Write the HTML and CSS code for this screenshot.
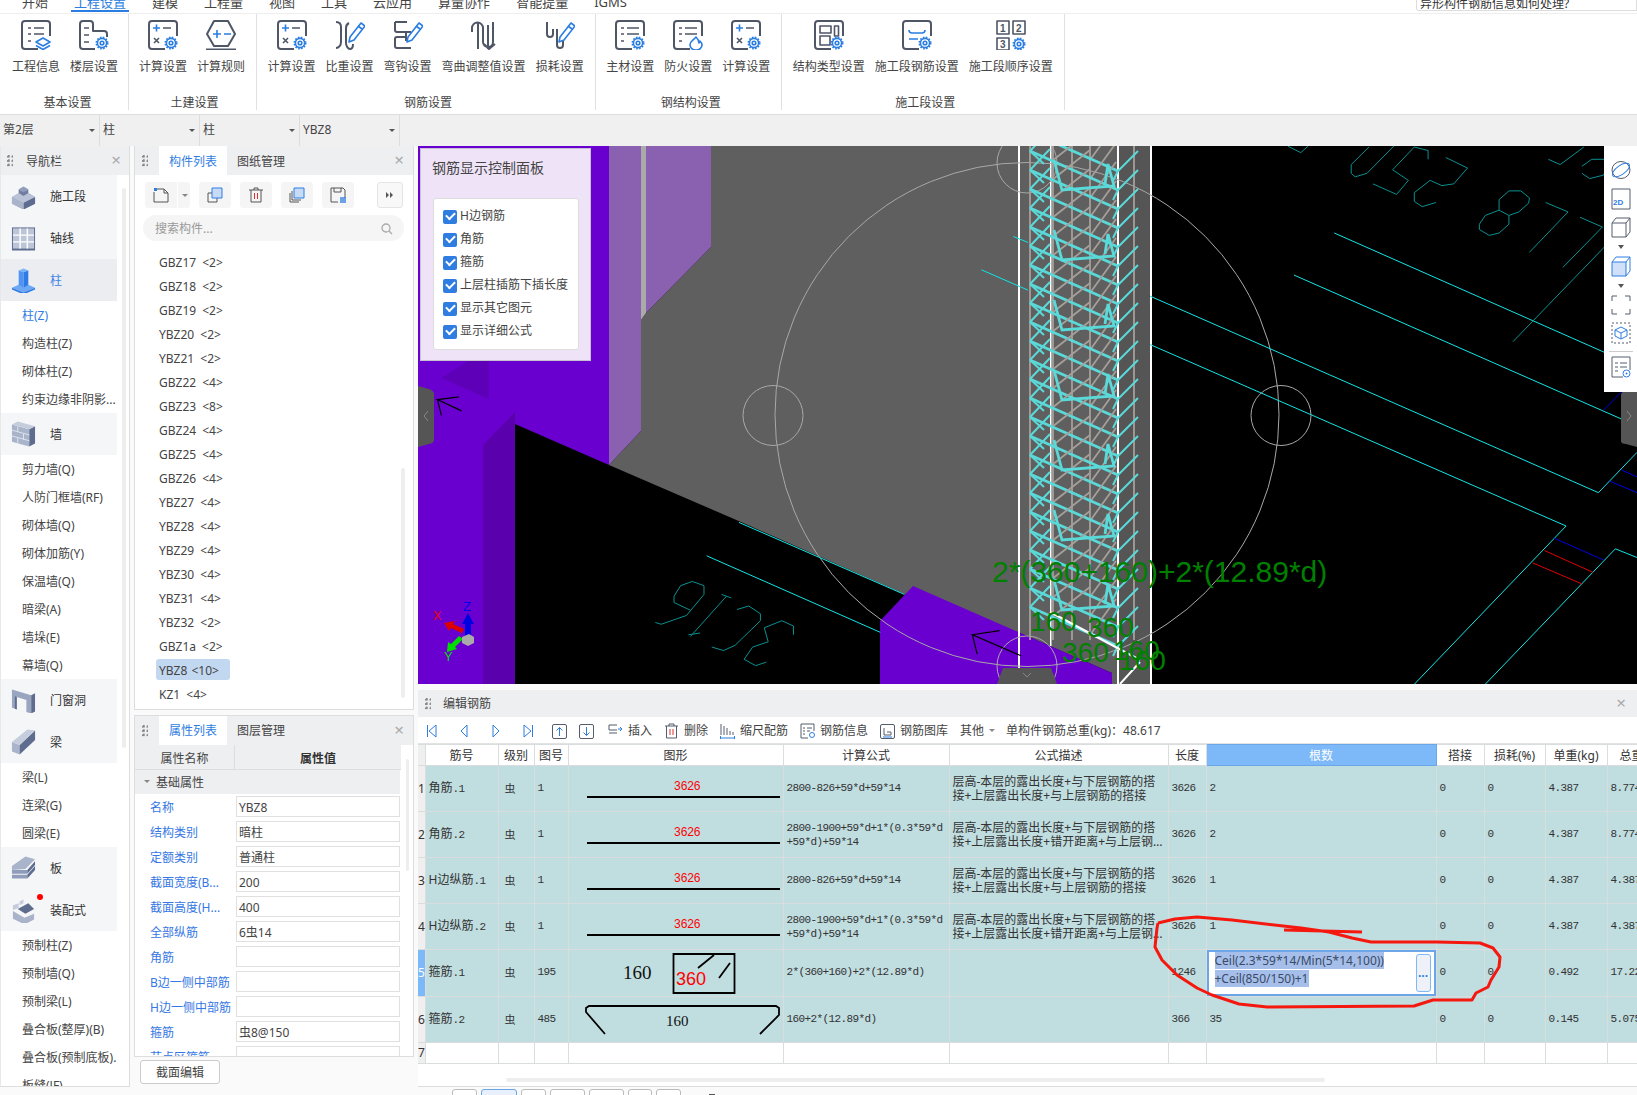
FILE: index.html
```html
<!DOCTYPE html>
<html lang="zh">
<head>
<meta charset="utf-8">
<title>编辑钢筋</title>
<link rel="stylesheet" href="styles.css">
</head>
<body>
<svg class="defs" width="0" height="0" aria-hidden="true">
  <defs>
    <g id="gear"><circle r="4.6" class="bl fw"/><circle r="1.8" class="bl"/><circle r="5.7" class="bl dash"/></g>
    <path id="frame" class="gr" d="M17 29H4a3 3 0 0 1-3-3V4a3 3 0 0 1 3-3h22a3 3 0 0 1 3 3v12"/>
    <g id="pencil"><path class="bl fw" d="M26 3l4 3-11 14-5 2 1-5z"/><path class="bl" d="M23 6l4 3"/></g>
    <g id="lines"><path class="gr2" d="M7 8h3M13 8h10M7 14h3M13 14h10M7 21h3"/></g>
    <g id="st">
      <path class="me3" d="M1052 160l38-30M1090 178l26-36"/>
      <path class="me1" d="M1030 150l88 39"/>
      <path class="me2" d="M1030 150l20-21M1118 189l20-20M1030 150l14 13M1118 189l-5 10"/>
    </g>
    <g id="hook"><path class="me1" d="M1054 200l8 30 52 -4-6-22-3 20"/></g>
  </defs>
</svg>

<div class="app">
  <nav class="menu">
    <a>开始</a><a class="on">工程设置</a><a>建模</a><a>工程量</a><a>视图</a><a>工具</a><a>云应用</a><a>算量协作</a><a>智能提量</a><a>IGMS</a>
    <div class="ask">异形构件钢筋信息如何处理?</div>
  </nav>

  <header class="ribbon">
    <section class="grp">
      <div class="items">
        <div class="item"><svg class="ico" viewBox="0 0 30 30"><use href="#frame"/><use href="#lines"/><path class="bl fw" d="M15 22l7-4 7 4-7 4z"/><path class="bl" d="M15 25.500l7 4 7-4"/></svg><span>工程信息</span></div>
        <div class="item"><svg class="ico" viewBox="0 0 30 30"><path class="gr" d="M16 29H4a3 3 0 0 1-3-3V4a3 3 0 0 1 3-3h7a3 3 0 0 1 3 3v7h11a3 3 0 0 1 3 3v3"/><path class="gr2" d="M5 8h5M5 15h5M5 22h5"/><use href="#gear" transform="translate(23 23)"/></svg><span>楼层设置</span></div>
      </div>
      <h4>基本设置</h4>
    </section>
    <section class="grp">
      <div class="items">
        <div class="item"><svg class="ico" viewBox="0 0 30 30"><use href="#frame"/><path class="bl" d="M5 8h7M8.500 4.500v7"/><path class="gr2" d="M15 8h8M6 18l5 5M11 18l-5 5"/><use href="#gear" transform="translate(23 23)"/></svg><span>计算设置</span></div>
        <div class="item"><svg class="ico" viewBox="0 0 30 30"><path class="gr" d="M8 1h14l7 13-7 12H8L1 14z"/><path class="bl" d="M7 14h8M11 10v8M18 14h7"/><path class="gr" d="M0 29.500h30"/></svg><span>计算规则</span></div>
      </div>
      <h4>土建设置</h4>
    </section>
    <section class="grp">
      <div class="items">
        <div class="item"><svg class="ico" viewBox="0 0 30 30"><use href="#frame"/><path class="bl" d="M5 8h7M8.500 4.500v7"/><path class="gr2" d="M15 8h8M6 18l5 5M11 18l-5 5"/><use href="#gear" transform="translate(23 23)"/></svg><span>计算设置</span></div>
        <div class="item"><svg class="ico" viewBox="0 0 30 30"><path class="gr" d="M1 2c3 0 5 2 5 5v15c0 3-2 6-5 6M14 3c-2 1-3 3-3 5v15c0 3 2 6 4 6s3-2 3-5"/><use href="#pencil"/></svg><span>比重设置</span></div>
        <div class="item"><svg class="ico" viewBox="0 0 30 30"><path class="gr" d="M2 2h12M2 2v8a2 2 0 0 0 2 2h14M13 12v9M13 17H4a2 2 0 0 0-2 2v7a2 2 0 0 0 2 2h14"/><use href="#pencil"/></svg><span>弯钩设置</span></div>
        <div class="item"><svg class="ico" viewBox="0 0 30 30"><path class="gr" d="M3 12V8a5 5 0 0 1 11 0v14a5 5 0 0 0 10 0V2M9 3v26M19 5v24M15 24l5 5 6-5"/></svg><span>弯曲调整值设置</span></div>
        <div class="item"><svg class="ico" viewBox="0 0 30 30"><path class="gr" d="M2 2v12a3 3 0 0 0 6 0V9M12 9v16a3 3 0 0 0 6 0v-4"/><use href="#pencil"/></svg><span>损耗设置</span></div>
      </div>
      <h4>钢筋设置</h4>
    </section>
    <section class="grp">
      <div class="items">
        <div class="item"><svg class="ico" viewBox="0 0 30 30"><use href="#frame"/><path class="gr2" d="M6 8h3M12 8h12M6 14h3M12 14h12M6 21h3"/><use href="#gear" transform="translate(23 23)"/></svg><span>主材设置</span></div>
        <div class="item"><svg class="ico" viewBox="0 0 30 30"><use href="#frame"/><path class="gr2" d="M6 8h3M12 8h12M6 14h3M12 14h12M6 21h3"/><path class="bl fw" d="M23 17c-2 3-6 4-6 8a6 5 0 0 0 12 0c0-2-1-3-2-4l-1 2c0-2-1-4-3-6z"/></svg><span>防火设置</span></div>
        <div class="item"><svg class="ico" viewBox="0 0 30 30"><use href="#frame"/><path class="bl" d="M5 8h7M8.500 4.500v7"/><path class="gr2" d="M15 8h8M6 18l5 5M11 18l-5 5"/><use href="#gear" transform="translate(23 23)"/></svg><span>计算设置</span></div>
      </div>
      <h4>钢结构设置</h4>
    </section>
    <section class="grp">
      <div class="items">
        <div class="item"><svg class="ico" viewBox="0 0 30 30"><use href="#frame"/><path class="gr1" d="M6 6h11v7H6zM20.500 6h4v10h-4zM6 16h10v9H6z"/><use href="#gear" transform="translate(23 23)"/></svg><span>结构类型设置</span></div>
        <div class="item"><svg class="ico" viewBox="0 0 30 30"><use href="#frame"/><path class="bl" d="M7 10c0 3 2 3 3 3h10c1 0 3 0 3-3M7 19h9"/><use href="#gear" transform="translate(23 23)"/></svg><span>施工段钢筋设置</span></div>
        <div class="item"><svg class="ico" viewBox="0 0 30 30"><path class="gr1" d="M1 1h12v13H1zM17 1h12v13H17zM1 18h12v12H1z"/><text x="4" y="11.500" class="nm">1</text><text x="20" y="11.500" class="nm">2</text><text x="4" y="28" class="nm">3</text><use href="#gear" transform="translate(23 24)"/></svg><span>施工段顺序设置</span></div>
      </div>
      <h4>施工段设置</h4>
    </section>
  </header>

  <div class="combos">
    <div class="combo">第2层</div>
    <div class="combo">柱</div>
    <div class="combo">柱</div>
    <div class="combo">YBZ8</div>
  </div>

  <div class="main">
    <aside class="nav">
      <div class="phead"><i class="grip"></i><span class="ptitle">导航栏</span><i class="close">×</i></div>
      <i class="nav-scroll"></i>
      <ul class="navlist">
        <li class="cat"><svg class="nic" viewBox="0 0 26 26"><path fill="#8f9cba" d="M13 7l12 7v7l-12 6z"/><path fill="#a9b4cb" d="M1 14l12-7v20L1 21z"/><path fill="#5d6c8f" d="M13 27l12-6v-7l-12 6z"/><path fill="#a9b4cb" d="M1 14l12 6v7L1 21z"/><path fill="#b9c2d6" d="M13 8l12 6-12 6-12-6z"/><path fill="#8f9cba" d="M8 6l5-3 5 3-5 3z"/><path fill="#6f7da0" d="M8 6v4l5 3 5-3V6l-5 3z"/></svg>施工段</li>
        <li class="cat"><svg class="nic" viewBox="0 0 26 26"><path fill="#5d6c8f" d="M1 2h24v24H1z"/><path fill="#bcc6d8" d="M2 3h22v21H2z"/><path stroke="#fff" stroke-width="1.500" d="M9.500 3v21M17 3v21M2 10h22M2 17h22"/></svg>轴线</li>
        <li class="cat active"><svg class="nic" viewBox="0 0 26 26"><path fill="#7ab4fa" d="M8 3l5-2 5 2-5 2z"/><path fill="#4e95f3" d="M8 3l5 2v17l-5-2z"/><path fill="#2f7be6" d="M18 3l-5 2v17l5-2z"/><path fill="#6ea8f5" d="M1 21l7-3 5 3 5-3 7 3-12 5z"/><path fill="#2f7be6" d="M1 21l12 5v2L1 23zM25 21l-12 5v2l12-5z"/></svg>柱</li>
        <li class="sub on">柱(Z)</li><li class="sub">构造柱(Z)</li><li class="sub">砌体柱(Z)</li><li class="sub">约束边缘非阴影...</li>
        <li class="cat"><svg class="nic" viewBox="0 0 26 26"><path fill="#a9b4cb" d="M1 3l18 5v18L1 21z"/><path fill="#5d6c8f" d="M19 8l6-3v18l-6 3z"/><path fill="#c5cddd" d="M1 3l6-3 18 5-6 3z"/><path stroke="#dfe4ee" d="M1 9l18 5M1 15l18 5M7 5v6M13 13v6M7 17v6"/></svg>墙</li>
        <li class="sub">剪力墙(Q)</li><li class="sub">人防门框墙(RF)</li><li class="sub">砌体墙(Q)</li><li class="sub">砌体加筋(Y)</li><li class="sub">保温墙(Q)</li><li class="sub">暗梁(A)</li><li class="sub">墙垛(E)</li><li class="sub">幕墙(Q)</li>
        <li class="cat"><svg class="nic" viewBox="0 0 26 26"><path fill="#9aa6bf" d="M1 2l20 6v19L1 21z"/><path fill="#5d6c8f" d="M21 8l4-2v19l-4 2z"/><path fill="#f5f6f8" d="M6 10l10 3v13l-10-3z"/><path fill="#5d6c8f" d="M4 9l2 1v13l-2-1z"/></svg>门窗洞</li>
        <li class="cat"><svg class="nic" viewBox="0 0 26 26"><path fill="#a9b4cb" d="M1 13l8 3v10l-8-3z"/><path fill="#5d6c8f" d="M9 16L25 1v10L9 26z"/><path fill="#c5cddd" d="M1 13L17 0l8 1L9 16z"/></svg>梁</li>
        <li class="sub">梁(L)</li><li class="sub">连梁(G)</li><li class="sub">圆梁(E)</li>
        <li class="cat"><svg class="nic" viewBox="0 0 26 26"><path fill="#a9b4cb" d="M1 11L15 1l10 3-10 10L1 15z"/><path fill="#8f9cba" d="M1 15h16v4H1zM1 20h16v4H1z"/><path fill="#5d6c8f" d="M17 15l8-9v4l-8 9zM17 20l8-9v4l-8 9z"/></svg>板</li>
        <li class="cat dot"><svg class="nic" viewBox="0 0 26 26"><path fill="#a9b4cb" d="M2 14l12 7 10-4v6l-10 5-12-6z"/><path fill="#5d6c8f" d="M7 12l11-6 6 6-9 5z"/><path fill="#c5cddd" d="M2 8l6-2v5l-6 2zM9 4l4-2v4l-4 2z"/></svg>装配式</li>
        <li class="sub">预制柱(Z)</li><li class="sub">预制墙(Q)</li><li class="sub">预制梁(L)</li><li class="sub">叠合板(整厚)(B)</li><li class="sub">叠合板(预制底板).</li><li class="sub">板缝(JF)</li>
      </ul>
    </aside>

    <div class="mid">
      <section class="complist">
        <div class="phead"><i class="grip"></i><span class="tab act">构件列表</span><span class="tab">图纸管理</span><i class="close">×</i></div>
        <div class="tools">
          <button class="tbtn split"><svg width="16" height="16" viewBox="0 0 16 16"><path class="gr1k" d="M4 2h7l4 4v9H1V5"/><path class="gr1k" d="M11 2v4h4"/><path fill="#2f7de1" d="M1 1h3v3H1z"/></svg><i class="caret"></i></button>
          <button class="tbtn"><svg width="16" height="16" viewBox="0 0 16 16"><path class="gr1k" d="M1 6h9v9H1z"/><path fill="#c7dbf7" stroke="#2f7de1" d="M5 1h10v10H5z"/></svg></button>
          <button class="tbtn"><svg width="16" height="16" viewBox="0 0 16 16"><path class="gr1k" d="M1 3h14M6 3V1h4v2M3 3v12h10V3"/><path stroke="#e03030" d="M6.500 6v6M9.500 6v6"/></svg></button>
          <button class="tbtn"><svg width="16" height="16" viewBox="0 0 16 16"><path class="gr1k" d="M1 6v9h9M3 4v9h9"/><path fill="#c7dbf7" stroke="#2f7de1" d="M5 1h10v10H5z"/></svg></button>
          <button class="tbtn"><svg width="16" height="16" viewBox="0 0 16 16"><path class="gr1k" d="M1 1h12l2 2v8M1 1v14h7M4 1v4h7V1"/><path fill="#2f7de1" d="M10 10h6v6h-6z" opacity=".7"/></svg></button>
          <button class="tbtn more"><svg width="8" height="6" viewBox="0 0 8 6"><path fill="#555" d="M0 0l3 3-3 3zM4 0l3 3-3 3z"/></svg></button>
        </div>
        <div class="search"><span>搜索构件...</span><svg width="12" height="12" viewBox="0 0 12 12"><circle cx="5" cy="5" r="4" fill="none" stroke="#aaa" stroke-width="1.300"/><path stroke="#aaa" stroke-width="1.300" d="M8 8l3 3"/></svg></div>
        <i class="list-scroll"></i>
        <ul class="comps">
          <li>GBZ17 &lt;2&gt;</li><li>GBZ18 &lt;2&gt;</li><li>GBZ19 &lt;2&gt;</li><li>YBZ20 &lt;2&gt;</li><li>YBZ21 &lt;2&gt;</li><li>GBZ22 &lt;4&gt;</li><li>GBZ23 &lt;8&gt;</li><li>GBZ24 &lt;4&gt;</li><li>GBZ25 &lt;4&gt;</li><li>GBZ26 &lt;4&gt;</li><li>YBZ27 &lt;4&gt;</li><li>YBZ28 &lt;4&gt;</li><li>YBZ29 &lt;4&gt;</li><li>YBZ30 &lt;4&gt;</li><li>YBZ31 &lt;4&gt;</li><li>YBZ32 &lt;2&gt;</li><li>GBZ1a &lt;2&gt;</li><li class="sel">YBZ8 &lt;10&gt;</li><li>KZ1 &lt;4&gt;</li>
        </ul>
      </section>

      <section class="props">
        <div class="phead"><i class="grip"></i><span class="tab act">属性列表</span><span class="tab">图层管理</span><i class="close">×</i></div>
        <i class="prop-scroll"></i>
        <div class="pcols"><span>属性名称</span><b>属性值</b></div>
        <div class="pgroup">基础属性</div>
        <div class="prow"><label>名称</label><div class="val">YBZ8</div></div>
        <div class="prow"><label>结构类别</label><div class="val">暗柱</div></div>
        <div class="prow"><label>定额类别</label><div class="val">普通柱</div></div>
        <div class="prow"><label>截面宽度(B...</label><div class="val">200</div></div>
        <div class="prow"><label>截面高度(H...</label><div class="val">400</div></div>
        <div class="prow"><label>全部纵筋</label><div class="val">6虫14</div></div>
        <div class="prow"><label>角筋</label><div class="val"></div></div>
        <div class="prow"><label>B边一侧中部筋</label><div class="val"></div></div>
        <div class="prow"><label>H边一侧中部筋</label><div class="val"></div></div>
        <div class="prow"><label>箍筋</label><div class="val">虫8@150</div></div>
        <div class="prow"><label>节点区箍筋</label><div class="val"></div></div>
      </section>
      <div class="pfoot"><button class="secedit">截面编辑</button></div>
    </div>

    <div class="right">
      <div class="view">
        <svg class="scene" viewBox="418 146 1219 538" width="1219" height="538">
          <rect x="418" y="146" width="1219" height="538" fill="#000"/>
          <path fill="#5f5f5f" d="M711 146H1150V684H1112V673L1020 633 904 594 741 522 609 465 641 431V320L646 313 711 247z"/>
          <path fill="#6a00d0" d="M418 146H609V465L515 424V684H418z"/>
          <path fill="#5a00ad" d="M515 412L483 445V684H515z"/>
          <path fill="#5e00b8" d="M441 378L468 361H489V399z"/>
          <path fill="#8a60b0" d="M609 146H641V431L609 465zM646 146H711V247L646 313z"/>
          <path fill="#aaa" d="M641 146H646V313L641 320z"/>
          <path fill="#6a00d0" d="M913 586L1112 673V684H880V621z"/>
          <path fill="#555" d="M1118 146H1150V684H1118z"/>
          <rect class="cw" x="1018" y="146" width="2" height="538"/>
          <rect class="cw" x="1150" y="146" width="2" height="538"/>
          <rect class="cw" x="1117" y="146" width="2" height="538"/>
          <rect class="cw" x="1050" y="146" width="1.500" height="500"/>
          <circle class="ci" cx="1027" cy="414.500" r="252"/>
          <circle class="ci" cx="773" cy="415.500" r="30"/>
          <circle class="ci" cx="1281" cy="415.500" r="30"/>
          <circle class="ci" cx="1027" cy="163" r="30"/>
          <circle class="ci" cx="1027" cy="666" r="30"/>

          <path class="me3" d="M1030 146V640M1053 146V640M1072 146V640M1090 146V640M1134 146V640"/>
          <use href="#st" y="-18"/><use href="#st" y="1"/><use href="#st" y="20"/><use href="#st" y="39"/><use href="#st" y="58"/><use href="#st" y="77"/><use href="#st" y="96"/><use href="#st" y="115"/><use href="#st" y="134"/><use href="#st" y="153"/><use href="#st" y="172"/><use href="#st" y="191"/><use href="#st" y="210"/><use href="#st" y="229"/><use href="#st" y="248"/><use href="#st" y="267"/><use href="#st" y="286"/><use href="#st" y="305"/><use href="#st" y="324"/><use href="#st" y="343"/><use href="#st" y="362"/><use href="#st" y="381"/><use href="#st" y="400"/><use href="#st" y="419"/><use href="#st" y="438"/><use href="#st" y="457"/>
          <use href="#hook" y="-40"/><use href="#hook" y="30"/><use href="#hook" y="100"/><use href="#hook" y="170"/><use href="#hook" y="240"/><use href="#hook" y="310"/><use href="#hook" y="380"/>
          <path class="cw2" d="M1120 684L1140 662M1050 612L1140 660"/>

          <g transform="translate(418 140) scale(.3891 .3509)" class="t">
            <path class="cy" d="M742 1185L1188 1403M825 1090L1250 1295M1530 275L1568 292M1448 370L1568 428"/>
            <path class="te" d="M610 1375L625 1380 690 1355 735 1295V1270L705 1258 675 1270 658 1300V1318L700 1340M780 1295L805 1305M793 1300L700 1415M695 1410L725 1405M880 1350L850 1328 820 1338M880 1350V1370L815 1440 785 1455 755 1445M965 1410V1385L935 1370 890 1390 900 1430 860 1445 838 1480 868 1498 895 1488"/>
            <path class="blk" d="M105 732L50 740 112 772M50 740L60 785M1495 1398L1425 1410 1550 1470M1425 1410L1437 1465"/>
          </g>
          <g transform="translate(1020 140) scale(.3943 .3509)" class="t">
            <path class="cy" d="M330 445L1467 1005 1565 890M330 583L1385 1100 1000 1551M695 385L1525 795M797 265L1482 605M1565 1190L1510 1165 1180 1551"/>
            <path class="te" d="M1333 178L1390 205 1292 320M1420 220L1477 248 1377 363M1250 575L1482 305M1165 240L1180 215 1215 200 1240 215V240L1215 265 1190 272 1165 255zM1215 200V170L1240 145H1270L1292 165 1290 180 1265 205 1240 215M950 15L880 95 850 105 840 95V70L885 20M1035 55V30L1000 20 945 85 985 115 955 155 895 125M1080 50L1135 80 1100 125 1070 130 1040 115 1000 150V175L1020 190 1055 178M1340 55L1370 70 1430 20M1425 75L1450 55H1500L1480 100 1445 110 1425 95M680 18L712 36 730 18"/>
            <path class="bluel" d="M1480 770L1528 715M1525 940L1565 960M1495 972L1565 1005M1355 1135L1480 1197"/>
            <path class="redl" d="M1330 1170L1453 1232M1300 1205L1425 1265"/>
          </g>

          <text class="gt gt-big" x="992" y="582">2*(360+160)+2*(12.89*d)</text>
          <text class="gt gt-s" x="1030" y="631">160</text>
          <text class="gt gt-s" x="1087" y="637">360</text>
          <text class="gt gt-s" x="1062" y="662">360</text>
          <text class="gt gt-s" x="1113" y="660">160</text>
          <text class="gt gt-s" x="1119" y="670">160</text>

          <text class="ax-x" x="433" y="620">X</text>
          <text class="ax-z" x="463" y="611">Z</text>
          <text class="ax-y" x="444" y="661">Y</text>
          <path fill="#d00" d="M444 623l5 8 2-3 11 5 2-4-11-5 2-3z"/>
          <path fill="#0000e0" d="M468 613l-6 11h3v12h6v-12h3z"/>
          <path fill="#00dd00" d="M447 652l10-3-2-2 8-8-4-3-8 8-3-2z"/>
          <path fill="#aaa" d="M462 637l7-3 5 3v6l-6 3-6-3z"/>

          <path class="hd" d="M418 386l11 3q5 2 5 5v46q0 3-5 4l-11 3z"/>
          <path class="chev" d="M428 411l-4 5 4 5"/>
          <path class="hd" d="M1637 387l-11 3q-5 2-5 5v46q0 3 5 3l11 3z"/>
          <path class="chev" d="M1627 411l4 5-4 5"/>
          <path class="hd" d="M1003 668h48l6 16h-60z"/>
          <path class="chev" d="M1023 673l4 4 4-4"/>
        </svg>

        <div class="ctrl">
          <div class="ctrl-title">钢筋显示控制面板</div>
          <div class="ctrl-box">
            <label class="chk"><i></i>H边钢筋</label>
            <label class="chk"><i></i>角筋</label>
            <label class="chk"><i></i>箍筋</label>
            <label class="chk"><i></i>上层柱插筋下插长度</label>
            <label class="chk"><i></i>显示其它图元</label>
            <label class="chk"><i></i>显示详细公式</label>
          </div>
        </div>

        <div class="vbar">
          <svg width="22" height="22" viewBox="0 0 22 22"><ellipse cx="11" cy="11" rx="9" ry="8.500" class="gk"/><ellipse cx="11" cy="11" rx="10" ry="4.500" transform="rotate(-35 11 11)" class="bk"/></svg>
          <svg width="20" height="22" viewBox="0 0 20 22"><path class="gk" d="M1 1h18v20H1z"/><text x="2" y="17" class="t2d">2D</text></svg>
          <svg width="20" height="21" viewBox="0 0 20 21"><path class="gk" d="M1 6h14v14H1zM1 6l4-5h14v14l-4 5M15 6l4-5"/></svg>
          <i class="vcaret"></i>
          <svg width="20" height="21" viewBox="0 0 20 21"><path class="bk fb" d="M1 6h14v14H1z"/><path class="bk" d="M1 6l4-5h14v14l-4 5M15 6l4-5"/></svg>
          <i class="vcaret"></i>
          <svg width="20" height="20" viewBox="0 0 20 20"><path class="gk" d="M1 6V1h5M14 1h5v5M19 14v5h-5M6 19H1v-5"/></svg>
          <svg width="20" height="22" viewBox="0 0 20 22"><path class="gk dsh" d="M1 1h18v20H1z"/><path class="bk" d="M10 5l6 3v6l-6 3-6-3V8zM4 8l6 3 6-3M10 11v6"/></svg>
          <hr>
          <svg width="20" height="22" viewBox="0 0 20 22"><path class="gk" d="M12 21H1V1h18v13M4 7h3M9 7h7M4 11h3M9 11h7M4 15h3"/><circle cx="15.500" cy="17.500" r="3.500" class="bk"/><circle cx="15.500" cy="17.500" r="1" fill="#2f7de1"/></svg>
        </div>
      </div>

      <section class="rebar">
        <div class="phead"><i class="grip"></i><span class="ptitle">编辑钢筋</span><i class="close">×</i></div>
        <div class="tb">
          <div class="tb-nav">
            <svg width="10" height="14" viewBox="0 0 10 14"><path class="bk" d="M.5 1v12M9 1v12L2 7z"/></svg>
            <svg width="10" height="14" viewBox="0 0 10 14"><path class="bk" d="M8 1v12L2 7z"/></svg>
            <svg width="10" height="14" viewBox="0 0 10 14"><path class="bk" d="M2 1v12l6-6z"/></svg>
            <svg width="10" height="14" viewBox="0 0 10 14"><path class="bk" d="M1 1v12l7-6zM9.500 1v12"/></svg>
          </div>
          <svg class="bx" width="15" height="15" viewBox="0 0 15 15"><rect x=".5" y=".5" width="14" height="14" rx="1.500" class="gk"/><path class="bk" d="M7.500 12V3.500M4.500 6.500l3-3 3 3"/></svg>
          <svg class="bx" width="15" height="15" viewBox="0 0 15 15"><rect x=".5" y=".5" width="14" height="14" rx="1.500" class="gk"/><path class="bk" d="M7.500 3v8.500M4.500 8.500l3 3 3-3"/></svg>
          <span class="tool first"><svg width="15" height="14" viewBox="0 0 15 14"><path class="gk" d="M9 1H1v5h8M1 9h8"/><path class="bk" d="M10 5h4M12 3l2 2-2 2"/></svg>插入</span>
          <span class="tool"><svg width="15" height="16" viewBox="0 0 15 16"><path class="gk" d="M1 3h13M5 3V1h5v2M2.500 3v12h10V3"/><path stroke="#e03030" d="M6 6v6M9 6v6"/></svg>删除</span>
          <span class="tool"><svg width="15" height="16" viewBox="0 0 15 16"><path class="gk" d="M1 1v11M4 3v9M7 5v7M10 8v4M13 9v3"/><path class="bk" d="M0 15h15M.5 13v3M14.500 13v3"/></svg>缩尺配筋</span>
          <span class="tool"><svg width="15" height="16" viewBox="0 0 15 16"><path class="gk" d="M14 8V1H1v14h7M3 5h2M7 5h5M3 8h2M7 8h3M3 11h2"/><circle cx="12" cy="12" r="2.500" class="bk"/></svg>钢筋信息</span>
          <span class="tool"><svg width="15" height="15" viewBox="0 0 15 15"><rect x=".5" y=".5" width="14" height="14" rx="1.500" class="gk"/><path class="gk" d="M4 4v7h7V8H7"/><path class="bk" d="M3 13h9"/></svg>钢筋图库</span>
          <span class="tool other">其他<i class="caret"></i></span>
          <span class="total">单构件钢筋总重(kg)：48.617</span>
        </div>

        <table class="grid">
          <colgroup><col class="w-n"><col class="w-a"><col class="w-b"><col class="w-c"><col class="w-d"><col class="w-e"><col class="w-f"><col class="w-g"><col class="w-h"><col class="w-i"><col class="w-j"><col class="w-k"><col class="w-l"></colgroup>
          <thead>
            <tr><th class="no"></th><th>筋号</th><th>级别</th><th>图号</th><th>图形</th><th>计算公式</th><th>公式描述</th><th>长度</th><th class="hl">根数</th><th>搭接</th><th>损耗(%)</th><th>单重(kg)</th><th class="last">总重(kg)</th></tr>
          </thead>
          <tbody>
            <tr class="d">
              <td class="no">1</td><td>角筋<span class="m">.1</span></td><td class="gd">虫</td><td class="m">1</td>
              <td class="sh"><svg class="shape" viewBox="0 0 215 45"><text class="len" x="118" y="24">3626</text><path class="bar" d="M18 31H211"/></svg></td>
              <td class="m">2800-826+59*d+59*14</td>
              <td class="desc">层高-本层的露出长度+与下层钢筋的搭<br>接+上层露出长度+与上层钢筋的搭接</td>
              <td class="m">3626</td><td class="m">2</td><td class="m">0</td><td class="m">0</td><td class="m">4.387</td><td class="m">8.774</td>
            </tr>
            <tr class="d">
              <td class="no">2</td><td>角筋<span class="m">.2</span></td><td class="gd">虫</td><td class="m">1</td>
              <td class="sh"><svg class="shape" viewBox="0 0 215 45"><text class="len" x="118" y="24">3626</text><path class="bar" d="M18 31H211"/></svg></td>
              <td class="m wrap">2800-1900+59*d+1*(0.3*59*d<br>+59*d)+59*14</td>
              <td class="desc">层高-本层的露出长度+与下层钢筋的搭<br>接+上层露出长度+错开距离+与上层钢…</td>
              <td class="m">3626</td><td class="m">2</td><td class="m">0</td><td class="m">0</td><td class="m">4.387</td><td class="m">8.774</td>
            </tr>
            <tr class="d">
              <td class="no">3</td><td>H边纵筋<span class="m">.1</span></td><td class="gd">虫</td><td class="m">1</td>
              <td class="sh"><svg class="shape" viewBox="0 0 215 45"><text class="len" x="118" y="24">3626</text><path class="bar" d="M18 31H211"/></svg></td>
              <td class="m">2800-826+59*d+59*14</td>
              <td class="desc">层高-本层的露出长度+与下层钢筋的搭<br>接+上层露出长度+与上层钢筋的搭接</td>
              <td class="m">3626</td><td class="m">1</td><td class="m">0</td><td class="m">0</td><td class="m">4.387</td><td class="m">4.387</td>
            </tr>
            <tr class="d">
              <td class="no">4</td><td>H边纵筋<span class="m">.2</span></td><td class="gd">虫</td><td class="m">1</td>
              <td class="sh"><svg class="shape" viewBox="0 0 215 45"><text class="len" x="118" y="24">3626</text><path class="bar" d="M18 31H211"/></svg></td>
              <td class="m wrap">2800-1900+59*d+1*(0.3*59*d<br>+59*d)+59*14</td>
              <td class="desc">层高-本层的露出长度+与下层钢筋的搭<br>接+上层露出长度+错开距离+与上层钢…</td>
              <td class="m">3626</td><td class="m">1</td><td class="m">0</td><td class="m">0</td><td class="m">4.387</td><td class="m">4.387</td>
            </tr>
            <tr class="d">
              <td class="no cur">5</td><td>箍筋<span class="m">.1</span></td><td class="gd">虫</td><td class="m">195</td>
              <td class="sh"><svg class="shape" viewBox="0 0 215 45"><text class="s160" x="54" y="28">160</text><path class="bar" d="M104.500 3h61v39h-61z"/><path class="bar" d="M145 4l-16 13M161 12l-11 15"/><text class="s360" x="107" y="34">360</text></svg></td>
              <td class="m">2*(360+160)+2*(12.89*d)</td>
              <td class="desc"></td>
              <td class="m">1246</td>
              <td class="edit"><div class="editor"><div class="etext"><span>Ceil(2.3*59*14/Min(5*14,100))</span><br><span>+Ceil(850/150)+1</span></div><button class="ebtn">...</button></div></td>
              <td class="m">0</td><td class="m">0</td><td class="m">0.492</td><td class="m">17.22</td>
            </tr>
            <tr class="d">
              <td class="no">6</td><td>箍筋<span class="m">.2</span></td><td class="gd">虫</td><td class="m">485</td>
              <td class="sh"><svg class="shape" viewBox="0 0 215 45"><path class="bar" d="M36 37L17 15V11L20 9H207L210 11V18L191 37"/><text class="s160b" x="97" y="29">160</text></svg></td>
              <td class="m">160+2*(12.89*d)</td>
              <td class="desc"></td>
              <td class="m">366</td><td class="m">35</td><td class="m">0</td><td class="m">0</td><td class="m">0.145</td><td class="m">5.075</td>
            </tr>
            <tr class="blank"><td class="no">7</td><td></td><td></td><td></td><td></td><td></td><td></td><td></td><td></td><td></td><td></td><td></td><td></td></tr>
          </tbody>
        </table>
        <i class="hscroll"></i>
      </section>

      <div class="pager">
        <i class="pg p25"></i><i class="pg p36 on"></i><i class="pg p25"></i><i class="pg p35"></i><i class="pg p35"></i><i class="pg p24"></i><i class="pg p25"></i><i class="pg-dash"></i>
      </div>
    </div>
  </div>

  <svg class="ink" viewBox="0 0 1637 1095" width="1637" height="1095" aria-hidden="true">
    <path d="M1158 923L1175 919 1197 917 1232 920 1301 928 1329 932 1352 938 1371 942 1437 942 1480 943 1493 948 1500 957 1499 967 1491 980 1488 987 1476 993 1472 1000 1433 1000 1414 1006 1267 1007 1239 1004 1212 995 1197 988 1177 975 1162 960 1155 947 1157 928 1158 923M1284 930L1362 932"/>
  </svg>
</div>
</body>
</html>
```
FILE: styles.css
```css
* { box-sizing: border-box; }
html, body { margin: 0; padding: 0; background: #fff; }
body { font: 12px/1.2 "Noto Sans", "Noto Sans CJK SC", sans-serif; color: #444; }
i { font-style: normal; display: block; }
ul { list-style: none; margin: 0; padding: 0; }
button { font: inherit; color: inherit; }
.defs { position: absolute; }

.app { position: relative; width: 1637px; height: 1095px; overflow: hidden; background: #fafafa; }

/* svg stroke kits */
.gr, .gr1, .gr2, .bl { fill: none; stroke-linejoin: round; }
.gr { stroke: #4f5666; stroke-width: 2; }
.gr1 { stroke: #4f5666; stroke-width: 1.6; }
.gr2 { stroke: #4f5666; stroke-width: 1.6; }
.bl { stroke: #2a7de1; stroke-width: 1.6; }
.fw { fill: #fff; }
.dash { stroke-dasharray: 1.6 1.4; }
.nm { font: 700 10px "Liberation Sans", sans-serif; fill: #4f5666; }
.gr1k { fill: none; stroke: #555; stroke-width: 1; }
.gk { fill: none; stroke: #555c6c; stroke-width: 1; }
.bk { fill: none; stroke: #2f7de1; stroke-width: 1; }
.fb { fill: #cfe0f8; }
.dsh { stroke-dasharray: 2 2; }
.t2d { font: 700 8px "Liberation Sans", sans-serif; fill: #2f7de1; }

/* menu */
.menu { height: 14px; display: flex; gap: 26px; padding-left: 22px; background: #fff; border-bottom: 1px solid #eee; overflow: hidden; position: relative; font-size: 13px; line-height: 14px; }
.menu a { height: 14px; margin-top: -5px; color: #444; position: relative; white-space: nowrap; }
.menu a.on { color: #2a7de1; }
.menu a.on::after { content: ""; position: absolute; left: -3px; right: -3px; bottom: -3px; height: 2px; background: #2a7de1; }
.ask { position: absolute; left: 1416px; right: 0; top: -2px; height: 13px; padding-left: 3px; font-size: 12px; line-height: 12px; color: #333; border: 1px solid #ddd; border-top: 0; border-radius: 0 0 0 3px; background: #fff; }

/* ribbon */
.ribbon { height: 101px; display: flex; background: #fff; border-bottom: 1px solid #ddd; }
.grp { display: flex; flex-direction: column; padding: 2px 6px 0 5.5px; height: 96px; border-right: 1px solid #e0e0e0; align-items: center; }
.grp:first-child { padding-left: 7px; padding-right: 4.5px; }
.items { display: flex; flex: 1; }
.item { display: flex; flex-direction: column; align-items: center; padding: 4px 5px 0; white-space: nowrap; color: #444; }
.ico { width: 30px; height: 30px; margin-bottom: 10px; flex: none; }
.grp h4 { margin: 0 0 0 5px; font-weight: 400; font-size: 12px; line-height: 21px; color: #444; height: 18px; }

/* combos */
.combos { height: 31px; display: flex; background: #f0f0f0; }
.combo { width: 100px; height: 31px; line-height: 30px; padding-left: 3px; border-right: 1px solid #ddd; position: relative; font-size: 12px; color: #444; }
.combo::after { content: ""; position: absolute; right: 4px; top: 14px; border: 3px solid transparent; border-top: 3px solid #555; border-bottom: 0; }

/* layout */
.main { display: flex; height: 949px; }
.phead { height: 29px; flex: none; display: flex; align-items: stretch; background: #eeeff1; position: relative; line-height: 29px; }
.nav .phead, .complist .phead { line-height: 31px; }
.grip { width: 6px; height: 12px; margin: 9px 0 0 7px; background: radial-gradient(circle at 1.500px 1.500px, #888 1.300px, transparent 1.500px) 0 0 / 4.500px 4.300px; flex: none; }
.ptitle { margin-left: 13px; color: #444; }
.close { position: absolute; right: 9px; top: 0; font-size: 17px; color: #aaa; line-height: 28px; }
.tab { padding: 0 10px; color: #444; }
.tab.act { background: #fff; color: #2f7de1; margin-left: 11px; }

/* nav */
.nav { width: 130px; height: 941px; position: relative; background: #fff; border-right: 1px solid #ddd; border-left: 1px solid #e8e8e8; border-bottom: 1px solid #ddd; overflow: hidden; flex: none; }
.nav .phead { margin: 0 -1px 0 -1px; }
.nav-scroll { position: absolute; right: 3px; top: 42px; height: 560px; width: 4px; background: #eee; border-radius: 2px; }
.navlist { width: 116px; }
.navlist li { white-space: nowrap; }
.cat { height: 42px; display: flex; align-items: center; background: #f5f6f8; color: #333; gap: 14px; padding: 3px 0 0 10px; position: relative; }
.cat.active { background: #ebedf1; color: #3f83e6; }
.nic { width: 25px; height: 26px; flex: none; margin-top: -3px; }
.dot::after { content: ""; position: absolute; left: 36px; top: 5px; width: 6px; height: 6px; border-radius: 50%; background: #f00; }
.sub { height: 28px; line-height: 30px; padding-left: 21px; color: #444; }
.sub.on { color: #2f7de1; }

/* middle */
.mid { width: 280px; margin-left: 4px; flex: none; display: flex; flex-direction: column; }
.complist { height: 564px; border: 1px solid #ddd; border-top: 0; position: relative; background: #fff; overflow: hidden; }
.tools { display: flex; padding: 7px 0 0 10px; gap: 9px; height: 33px; }
.tbtn { width: 32px; height: 26px; padding: 0; background: #f5f5f5; border: 0; border-radius: 3px; display: flex; align-items: center; justify-content: center; position: relative; }
.tbtn.split { width: 45px; justify-content: flex-start; padding-left: 8px; }
.tbtn.split::after { content: ""; position: absolute; left: 32px; top: 0; bottom: 0; width: 1px; background: #fff; }
.caret { width: 0; height: 0; border: 3px solid transparent; border-top: 3px solid #888; border-bottom: 0; }
.tbtn.split .caret { position: absolute; left: 37px; top: 12px; }
.tbtn.more { width: 26px; margin-left: 14px; background: #f8f8f8; border: 1px solid #e5e5e5; }
.search { margin: 7px 9px 0 8px; width: 261px; height: 26px; border-radius: 13px; background: #f5f5f5; display: flex; align-items: center; justify-content: space-between; padding: 2px 11px 0 12px; color: #999; }
.list-scroll { position: absolute; left: 266px; top: 322px; width: 4px; height: 230px; background: #eee; border-radius: 2px; }
.comps { margin-top: 9px; }
.comps li { height: 24px; line-height: 26px; margin-left: 21px; padding-left: 3px; width: 74px; word-spacing: 3px; white-space: nowrap; }
.comps .sel { background: #c2d8f0; border-radius: 3px; height: 21px; line-height: 23px; margin-top: 1px; margin-bottom: 2px; word-spacing: 1px; }

.props { height: 342px; margin-top: 5px; border: 1px solid #ddd; position: relative; overflow: hidden; background: #fff; }
.prop-scroll { position: absolute; left: 271px; top: 43px; width: 3px; height: 112px; background: #eee; border-radius: 2px; }
.pcols { display: flex; width: 266px; height: 25px; background: #eeeff1; border-bottom: 1px solid #ddd; line-height: 28px; text-align: center; color: #444; }
.pcols span { width: 100px; border-right: 1px solid #ddd; }
.pcols b { flex: 1; font-weight: 700; color: #333; }
.pgroup { width: 265px; height: 24px; line-height: 26px; background: #eeeff1; padding-left: 21px; position: relative; color: #444; }
.pgroup::before { content: ""; position: absolute; left: 9px; top: 10px; border: 3px solid transparent; border-top: 3px solid #888; border-bottom: 0; }
.prow { height: 25px; width: 265px; display: flex; align-items: center; }
.prow label { width: 101px; padding: 3px 0 0 15px; color: #3577e3; white-space: nowrap; overflow: hidden; }
.val { width: 164px; height: 21px; line-height: 21px; border: 1.5px solid #e0e0e0; padding-left: 2px; color: #444; background: #fff; }
.pfoot { height: 30px; padding: 3px 0 0 6px; }
.secedit { width: 80px; height: 24px; background: #fff; border: 1px solid #ccc; border-radius: 3px; color: #444; padding: 2px 0 0; }

/* right */
.right { width: 1219px; margin-left: 4px; flex: none; display: flex; flex-direction: column; background: #fafafa; }
.view { height: 538px; position: relative; flex: none; overflow: hidden; }
.scene { display: block; }
.scene .t * { vector-effect: non-scaling-stroke; }
.cw { fill: #fff; }
.cw2 { stroke: #fff; stroke-width: 2; fill: none; }
.ci { fill: none; stroke: #a8a8a8; stroke-width: 1; }
.me1 { stroke: #5ad9d9; stroke-width: 2.800; fill: none; }
.me2 { stroke: #5ad9d9; stroke-width: 2; fill: none; }
.me3 { stroke: #a59f9a; stroke-width: 1.800; fill: none; }
.cy { fill: none; stroke: #10e5e5; stroke-width: 1; }
.te { fill: none; stroke: #0a9090; stroke-width: 1; }
.blk { fill: none; stroke: #000; stroke-width: 1.200; }
.bluel { fill: none; stroke: #0000e0; stroke-width: 1; }
.redl { fill: none; stroke: #e00000; stroke-width: 1; }
.gt { font-family: "Liberation Sans", sans-serif; fill: #008000; }
.gt-big { font-size: 30px; }
.gt-s { font-size: 28px; }
.ax-x, .ax-y, .ax-z { font: 13px "Liberation Sans", sans-serif; }
.ax-x { fill: #f00000; }
.ax-y { fill: #00dd00; }
.ax-z { fill: #0000f0; }
.hd { fill: #555; }
.chev { fill: none; stroke: #888; stroke-width: 1; }

.ctrl { position: absolute; left: 2px; top: 2px; width: 171px; height: 213px; background: #efe3f8; border: 1px solid #c8c0d0; }
.ctrl-title { font-size: 14px; line-height: 18px; margin: 10px 0 0 11px; color: #444; }
.ctrl-box { margin: 21px 0 0 12px; width: 146px; height: 152px; background: #fff; border: 1px solid #ddd; border-radius: 3px; padding: 6px 0 0 9px; }
.chk { display: flex; align-items: center; height: 23px; gap: 3px; color: #444; white-space: nowrap; }
.chk i { width: 14px; height: 14px; background: #2f7de1; border-radius: 2px; position: relative; flex: none; }
.chk i::after { content: ""; position: absolute; left: 3px; top: 2px; width: 7px; height: 4px; border-left: 2px solid #fff; border-bottom: 2px solid #fff; transform: rotate(-45deg); }

.vbar { position: absolute; right: 0; top: 0; width: 33px; height: 246px; background: #fff; display: flex; flex-direction: column; align-items: center; padding-top: 13px; gap: 7px; }
.vbar svg { flex: none; }
.vcaret { border: 3px solid transparent; border-top: 4px solid #555; border-bottom: 0; flex: none; }
.vbar hr { width: 24px; margin: 0 0 -3px; border: 0; border-top: 1px solid #ccc; flex: none; }

.rebar { height: 397px; margin-top: 6px; flex: none; background: #fff; border-bottom: 1px solid #ddd; position: relative; overflow: hidden; }
.rebar .phead { height: 27px; line-height: 27px; }
.rebar .ptitle { margin-left: 12px; }
.rebar .grip { margin-left: 7px; margin-top: 8px; }
.rebar .close { right: 11px; line-height: 26px; }
.tb { height: 27px; display: flex; align-items: center; padding: 2px 0 0 9px; gap: 12px; border-bottom: 1px solid #e3e3e3; white-space: nowrap; }
.tb-nav { display: flex; gap: 22px; margin-right: 7px; }
.tool { display: inline-flex; align-items: center; gap: 5px; color: #444; }
.tool.first { margin-left: 2px; }
.total { margin-left: -1px; color: #444; }

.grid { table-layout: fixed; border-collapse: collapse; width: 1219px; }
.w-n { width: 7px; } .w-a { width: 73px; } .w-b { width: 36px; } .w-c { width: 34px; } .w-d { width: 215px; } .w-e { width: 166px; }
.w-f { width: 219px; } .w-g { width: 38px; } .w-h { width: 230px; } .w-i { width: 48px; } .w-j { width: 61px; } .w-k { width: 62px; } .w-l { width: 30px; }
.grid th, .grid td { border: 1px solid #d9dddd; padding: 0 0 0 3px; font-weight: 400; overflow: hidden; white-space: nowrap; color: #333; }
.grid th { height: 21px; text-align: center; background: #fff; padding: 2px 0 0; }
.grid th.hl { background: #7db8f8; color: #fff; border-color: #6ba6e8; }
.grid th.last { text-align: left; padding-left: 12px; }
.grid .no { background: #efefef; padding: 0; text-align: center; font-size: 12px; overflow: visible; border-left: 0; }
.grid td.no { line-height: 12px; }
.grid .no.cur { background: #7db8f8; color: #fff; }
.d { height: 46px; }
.d td { background: #c0dde0; }
.d td.no { background: #efefef; }
.d td.no.cur { background: #7db8f8; }
.blank { height: 21px; }
.m { font-family: "Liberation Mono", monospace; font-size: 11px; letter-spacing: -.6px; }
.wrap { line-height: 14px; }
.gd { font-size: 11px; padding-left: 6px !important; }
.grid td.sh { padding: 0; line-height: 0; }
.shape { width: 215px; height: 45px; display: block; }
.bar { fill: none; stroke: #000; stroke-width: 1.800; }
.len { font: 12px "Liberation Mono", monospace; letter-spacing: -.6px; fill: #f00; text-anchor: middle; }
.s160 { font: 19px "Liberation Serif", serif; fill: #111; }
.s160b { font: 15px "Liberation Serif", serif; fill: #111; }
.s360 { font: 18px "Liberation Sans", sans-serif; fill: #f00; }
.desc { line-height: 14px; color: #222; }
.grid td.edit { padding: 0; background: #fff; }
.editor { height: 46px; border: 2px solid #6ba6e8; background: #fff; position: relative; padding: 0 0 0 6px; line-height: 18px; color: #3a4a66; }
.etext span { background: #a5bfea; }
.ebtn { position: absolute; right: 3px; top: 2px; width: 15px; height: 38px; padding: 0; background: #eef2f8; border: 1px solid #7db8f8; border-radius: 3px; color: #2f7de1; font-weight: 700; line-height: 30px; }

.hscroll { position: absolute; left: 88px; top: 388px; width: 819px; height: 4px; background: #eee; border-radius: 2px; }

.pager { height: 8px; display: flex; padding: 2px 0 0 34px; overflow: hidden; gap: 4px; }
.pg { height: 12px; border: 1px solid #bbb; border-radius: 3px 3px 0 0; background: #fff; flex: none; }
.pg.on { border-color: #6ba6e8; background: #e8f0fb; }
.p25 { width: 25px; } .p36 { width: 36px; } .p35 { width: 35px; } .p24 { width: 24px; }
.pg-dash { width: 6px; height: 1px; background: #555; margin: 5px 0 0 24px; flex: none; }

.ink { position: absolute; left: 0; top: 0; pointer-events: none; }
.ink path { fill: none; stroke: #f5180f; stroke-width: 3; stroke-linejoin: round; }
```
